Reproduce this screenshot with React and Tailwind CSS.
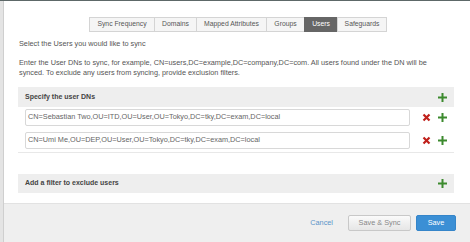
import React from "react";

const tabs = [
  { label: "Sync Frequency", w: "w-[66px]" },
  { label: "Domains", w: "w-[43px]" },
  { label: "Mapped Attributes", w: "w-[71px]" },
  { label: "Groups", w: "w-[39px]" },
  { label: "Users", w: "w-[34px]" },
  { label: "Safeguards", w: "w-[50px]" },
];

const dns = [
  "CN=Sebastian Two,OU=ITD,OU=User,OU=Tokyo,DC=tky,DC=exam,DC=local",
  "CN=Umi Me,OU=DEP,OU=User,OU=Tokyo,DC=tky,DC=exam,DC=local",
];

function Plus() {
  return (
    <svg width="11" height="11" viewBox="0 0 11 11">
      <path d="M5.5 1v9M1 5.5h9" stroke="#3c8a2e" strokeWidth="2" />
    </svg>
  );
}

function Cross() {
  return (
    <svg width="9" height="9" viewBox="0 0 9 9">
      <path d="M1.5 1.5l6 6M7.5 1.5l-6 6" stroke="#c0201b" strokeWidth="2.2" />
    </svg>
  );
}

export default function App() {
  return (
    <div className="w-[470px] h-[242px] bg-white flex flex-col overflow-hidden font-['Liberation_Sans',Arial,sans-serif] text-[#555]">
      <div className="h-px bg-[#5d6868] shrink-0" />
      <div className="flex flex-1">
        <div className="w-[4px] bg-[#e4e4e4] border-r border-[#cfcfcf] shrink-0" />
        <div className="flex-1 flex flex-col">
          <div className="flex pl-[85px] pt-[16px]">
            {tabs.map((t) => (
              <div
                key={t.label}
                className={
                  t.label === "Users"
                    ? `${t.w} h-[15px] flex items-center justify-center text-[6.8px] bg-[#666] text-white border border-[#666] -ml-px`
                    : `${t.w} h-[15px] flex items-center justify-center text-[6.8px] bg-[#f5f5f5] text-[#555] border border-[#d4d4d4] -ml-px first:ml-0`
                }
              >
                {t.label}
              </div>
            ))}
          </div>
          <div className="pl-[15px] pt-[7px] text-[7.3px] leading-[10px]">Select the Users you would like to sync</div>
          <div className="pl-[15px] pr-[30px] pt-[9px] text-[7.3px] leading-[10px]">
            Enter the User DNs to sync, for example, CN=users,DC=example,DC=company,DC=com. All users found under the DN will be synced. To exclude any users from syncing, provide exclusion filters.
          </div>
          <div className="ml-[14px] mr-[16px] mt-[9px]">
            <div className="h-[20px] bg-[#eeeeee] flex items-center justify-between pl-[7px] pr-[6px]">
              <span className="text-[7px] font-bold text-[#444]">Specify the user DNs</span>
              <Plus />
            </div>
            <div className="border-b border-[#e8e8e8]">
              {dns.map((d) => (
                <div key={d} className="flex items-center pl-[7px] pr-[6px] pt-[2px] pb-[4px] last:pb-[3px]">
                  <div className="w-[385px] h-[17px] border border-[#d8d8d8] rounded-[2px] flex items-center pl-[2px] text-[7.3px] text-[#666]">
                    {d}
                  </div>
                  <div className="flex-1 flex items-center justify-end gap-[6px]">
                    <Cross />
                    <Plus />
                  </div>
                </div>
              ))}
            </div>
            <div className="mt-[21px] h-[19px] bg-[#eeeeee] flex items-center justify-between pl-[7px] pr-[6px]">
              <span className="text-[7px] font-bold text-[#444]">Add a filter to exclude users</span>
              <Plus />
            </div>
          </div>
          <div className="mt-auto h-[39px] bg-[#efefef] border-t border-[#e2e2e2] flex items-center justify-end pr-[14px]">
            <span className="text-[7.3px] text-[#5b95c9] mr-[15px]">Cancel</span>
            <div className="w-[63px] h-[16px] border border-[#c8c8c8] rounded-[2px] bg-gradient-to-b from-[#fafafa] to-[#e6e6e6] flex items-center justify-center text-[7.3px] text-[#888] mr-[5px]">
              Save &amp; Sync
            </div>
            <div className="w-[40px] h-[16px] bg-[#3b8fd5] border border-[#3585c9] rounded-[2px] flex items-center justify-center text-[7.3px] text-white">
              Save
            </div>
          </div>
        </div>
      </div>
    </div>
  );
}
